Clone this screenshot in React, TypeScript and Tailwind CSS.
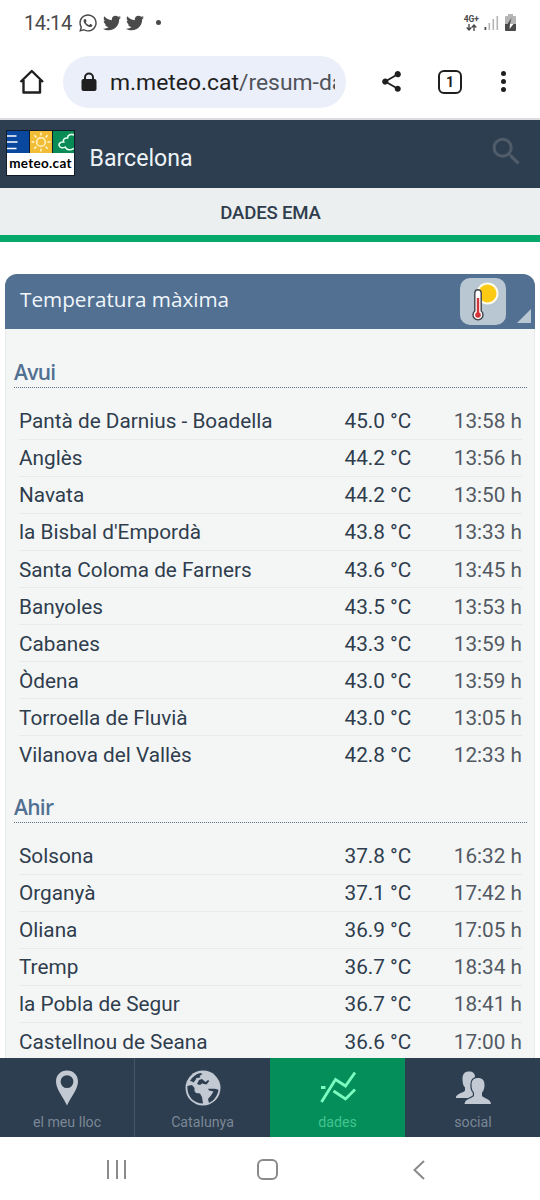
import { FaTwitter, FaWhatsapp } from "react-icons/fa";
import { MdSearch, MdShare } from "react-icons/md";

type Reading = {
  place: string;
  value: string;
  time: string;
};

const today: Reading[] = [
  { place: "Pantà de Darnius - Boadella", value: "45.0 °C", time: "13:58 h" },
  { place: "Anglès", value: "44.2 °C", time: "13:56 h" },
  { place: "Navata", value: "44.2 °C", time: "13:50 h" },
  { place: "la Bisbal d'Empordà", value: "43.8 °C", time: "13:33 h" },
  { place: "Santa Coloma de Farners", value: "43.6 °C", time: "13:45 h" },
  { place: "Banyoles", value: "43.5 °C", time: "13:53 h" },
  { place: "Cabanes", value: "43.3 °C", time: "13:59 h" },
  { place: "Òdena", value: "43.0 °C", time: "13:59 h" },
  { place: "Torroella de Fluvià", value: "43.0 °C", time: "13:05 h" },
  { place: "Vilanova del Vallès", value: "42.8 °C", time: "12:33 h" },
];

const yesterday: Reading[] = [
  { place: "Solsona", value: "37.8 °C", time: "16:32 h" },
  { place: "Organyà", value: "37.1 °C", time: "17:42 h" },
  { place: "Oliana", value: "36.9 °C", time: "17:05 h" },
  { place: "Tremp", value: "36.7 °C", time: "18:34 h" },
  { place: "la Pobla de Segur", value: "36.7 °C", time: "18:41 h" },
  { place: "Castellnou de Seana", value: "36.6 °C", time: "17:00 h" },
];

function StatusBar() {
  return (
    <div className="flex h-[45px] shrink-0 items-center pl-[24px] pr-[24px] text-[#4a4a4a]">
      <span className="mt-px w-[49px] whitespace-nowrap text-[20px] leading-none tracking-[-0.4px]">14:14</span>
      <FaWhatsapp className="ml-[5px] size-[20px]" />
      <FaTwitter className="ml-[5px] size-[18px]" />
      <FaTwitter className="ml-[5px] size-[18px]" />
      <span className="ml-[12px] size-[5px] rounded-full bg-[#4a4a4a]" />
      <div className="ml-auto flex items-center">
        <div className="flex flex-col items-center">
          <span className="text-[8.5px] font-bold leading-[9px]">4G+</span>
          <svg className="h-[7px] w-[11px]" viewBox="0 0 11 7" fill="none" stroke="currentColor" strokeWidth="1.4">
            <path d="M3 0v6M.7 3.6 3 6l2.3-2.4M8 7V1M5.7 3.4 8 1l2.3 2.4" />
          </svg>
        </div>
        <svg className="ml-[5px] h-[15px] w-[15px]" viewBox="0 0 15 15">
          <path d="M.5 12h1.8v3H.5z" fill="#4a4a4a" />
          <path d="M4.5 8h1.6v7H4.5zM8.5 4h1.6v11H8.5zM12.5 1h1.6v14h-1.6z" fill="#b5b5b5" />
        </svg>
        <svg className="ml-[6px] h-[17px] w-[11px]" viewBox="0 0 11 17">
          <path d="M3 0h5v2h2a1 1 0 0 1 1 1v7H0V3a1 1 0 0 1 1-1h2z" fill="#b5b5b5" />
          <path d="M0 10h11v6a1 1 0 0 1-1 1H1a1 1 0 0 1-1-1z" fill="#4a4a4a" />
          <path d="M6.500 4 2.500 10H5z" fill="#4a4a4a" />
          <path d="M5 10h3.500L4.500 15z" fill="#fff" />
        </svg>
      </div>
    </div>
  );
}

function BrowserBar() {
  return (
    <div className="flex h-[75px] shrink-0 items-center border-b-2 border-[#dadce0] pl-[19px] pr-[34px] text-[#1f1f1f]">
      <svg className="h-[26px] w-[26px]" viewBox="0 0 26 26" fill="none" stroke="currentColor" strokeWidth="2.4" strokeLinejoin="round">
        <path d="M1.500 13 12.800 2 24 13M4.500 11v12.500h16.500V11" />
      </svg>
      <div className="ml-[18px] flex h-[52px] w-[283px] items-center rounded-full bg-[#ebeff9] pl-[18px] pr-[11px]">
        <svg className="h-[20px] w-[16px] shrink-0" viewBox="0 0 16 20">
          <path d="M4 8V5.500a4 4 0 0 1 8 0V8" fill="none" stroke="currentColor" strokeWidth="2" />
          <rect x=".5" y="7" width="15" height="12" rx="2" fill="currentColor" />
        </svg>
        <div className="ml-[13px] mt-[2px] w-[225px] overflow-hidden whitespace-nowrap text-[22.9px] leading-[32px]">
          m.meteo.cat<span className="text-[#50535a]">/resum-da</span>
        </div>
      </div>
      <MdShare className="ml-[33px] size-[25px]" />
      <div className="ml-[34px] flex size-[24px] items-center justify-center rounded-[6px] border-[2.5px] border-[#1f1f1f] text-[14px] font-bold leading-none">
        1
      </div>
      <div className="ml-auto flex flex-col gap-[3px]">
        <span className="size-[5px] rounded-full bg-[#1f1f1f]" />
        <span className="size-[5px] rounded-full bg-[#1f1f1f]" />
        <span className="size-[5px] rounded-full bg-[#1f1f1f]" />
      </div>
    </div>
  );
}

function Logo() {
  return (
    <div className="mb-[2px] flex h-[46px] w-[69px] flex-col border border-[#111c2a] bg-white">
      <svg className="h-[22px] w-[67px] shrink-0" viewBox="0 0 67 22" fill="none">
        <path d="M0 0h22v22H0z" fill="#0a479f" />
        <path d="M22 0h23v22H22z" fill="#f2bd36" />
        <path d="M45 0h22v22H45z" fill="#098b55" />
        <path d="M22.500 0v22M45.500 0v22" stroke="#111c2a" />
        <path d="M0 5h9.500M0 11h10.500M0 17.500h9.500" stroke="#fff" strokeWidth="1.6" />
        <circle cx="34" cy="11" r="4.300" stroke="#fff5c4" strokeWidth="1.5" />
        <path
          d="M34 1.500v3M34 17.500v3M24.500 11h3M40.500 11h3M27.300 4.300l2.100 2.100M38.600 15.600l2.100 2.100M27.300 17.700l2.100-2.100M38.600 6.400l2.100-2.100"
          stroke="#fff5c4"
          strokeWidth="1.5"
        />
        <path
          d="M67 4c-3-1.500-6.500 0-6.500 3-3-.3-4.800 1.600-3.800 4-3.500-.2-5.200 1.800-4.500 3.800.8 2.200 3.700 2.400 6 1.300 1.500 3 5.500 3.500 8.800 1.200"
          stroke="#e4fff0"
          strokeWidth="1.6"
        />
      </svg>
      <span className="whitespace-nowrap text-center font-[Lato,sans-serif] text-[13.5px] font-bold leading-[20px] tracking-[0.3px] text-black">
        meteo.cat
      </span>
    </div>
  );
}

function Header() {
  return (
    <header className="flex h-[68px] shrink-0 items-center bg-[#2d3e50] pl-[6px] pr-[15px]">
      <Logo />
      <h1 className="ml-[14.5px] mt-[10px] text-[23.1px] leading-[30px] text-[#eef3f7]">Barcelona</h1>
      <MdSearch className="mb-[5px] ml-auto size-[37px] text-[#505c69]" />
    </header>
  );
}

function ThermometerBadge() {
  return (
    <svg className="h-[47px] w-[46px]" viewBox="0 0 46 47">
      <rect width="46" height="47" rx="10" fill="#b9c7d3" />
      <circle cx="27.500" cy="15.500" r="11" fill="#fffbea" />
      <circle cx="27.500" cy="15.500" r="9" fill="#fcc913" />
      <path d="M14.800 15a3.200 3.200 0 0 1 6.400 0v18a5 5 0 1 1-6.400 0z" fill="#fff" stroke="#3f4248" strokeWidth="1.4" />
      <path d="M18 20v17" stroke="#d1353a" strokeWidth="2.4" />
      <circle cx="18" cy="37" r="2.800" fill="#d1353a" />
    </svg>
  );
}

function ReadingList({ title, readings }: { title: string; readings: Reading[] }) {
  return (
    <section>
      <h3 className="h-[29px] border-b border-dotted border-[#5f6f7f] font-['Open_Sans',sans-serif] text-[21px] font-semibold leading-[27px] tracking-[-0.7px] text-[#527092]">
        {title}
      </h3>
      <ul className="mx-[5px] mt-[14.5px]">
        {readings.map((reading) => (
          <li
            key={reading.place}
            className="flex h-[37.1px] items-center border-b border-[#e8ebec] pt-[2px] text-[20.75px] leading-none text-[#2f3d4d] last:border-transparent"
          >
            <span className="w-[325.5px] whitespace-nowrap">{reading.place}</span>
            <span className="whitespace-nowrap">{reading.value}</span>
            <span className="ml-auto whitespace-nowrap text-[#535a63]">{reading.time}</span>
          </li>
        ))}
      </ul>
    </section>
  );
}

function PinIcon() {
  return (
    <svg className="h-[36px] w-[24px]" viewBox="0 0 24 36">
      <path
        fillRule="evenodd"
        d="M12 .5C5.500.500 1 5.200 1 11.500 1 19 7.500 26 12 35.500 16.500 26 23 19 23 11.500 23 5.200 18.500.500 12 .500zM12 5.200a6.400 6.400 0 1 1 0 12.800 6.400 6.400 0 0 1 0-12.800z"
        fill="#c3c9d2"
      />
    </svg>
  );
}

function GlobeIcon() {
  return (
    <svg className="size-[36px]" viewBox="0 0 36 36">
      <circle cx="18" cy="18" r="17.500" fill="#c3c9d2" />
      <g fill="#2d3e50">
        <path d="M2.300 16 7 15l2.500 3 0 3 1.500 2 4 .5L17 27l1 6.500C9 33.500 2 27 2.300 16z" />
        <path d="M5 11c2-4 6-7 10.500-8l2 1-3 2 1 1.500-4 .5-1 2-2 2.500L7 11.500z" />
        <path d="m14 10 3-1 3.500 3L23 10l1.300 1L21.500 14.500 17 13.500 15 15l-3-1z" />
        <path d="M23 18.800h7l3.500 1C32.500 26.500 28.500 31 24 33l-1-4 3-3.500 2.500-4-4.500-1z" />
      </g>
    </svg>
  );
}

function TrendIcon() {
  return (
    <svg className="size-[36px]" viewBox="0 0 36 36" fill="none" stroke="#7dfcc0" strokeWidth="2.8">
      <path d="M1.500 32 15.500 9.500l10 6.500L35 2.500M13.500 21 25.500 29 35 19.500M1 17.500h4.500" />
    </svg>
  );
}

function PeopleIcon() {
  const front =
    "M23 8c4.500 0 6.500 2.500 6.500 7 0 3.500-1 6-2.500 7.500v3.500c2 2.500 8.500 2.500 9 8H9.500c.5-5.500 7.500-5.500 9.500-8v-3.500C17.500 21 16.500 18.500 16.500 15c0-4.500 2-7 6.500-7z";

  return (
    <svg className="size-[36px]" viewBox="0 0 36 36" fill="#c3c9d2">
      <path d="M14 1.500c4 0 6 2 6 5.500L18 20v8H.8c.5-5 7.200-4.500 9.200-7.500v-3C8.500 16 7.500 13.500 7.500 9c0-5 2-7.500 6.500-7.500z" />
      <path d={front} stroke="#2d3e50" strokeWidth="2.4" />
      <path d={front} />
    </svg>
  );
}

function BottomNav() {
  return (
    <nav className="grid h-[79px] shrink-0 grid-cols-4 bg-[#2d3e50] text-[14.2px] leading-[18px] text-[#7b8795]">
      <div className="flex flex-col items-center gap-[7px] border-r border-[#44566a] pt-[12px]">
        <PinIcon />
        <span>el meu lloc</span>
      </div>
      <div className="flex flex-col items-center gap-[7px] pt-[12px]">
        <GlobeIcon />
        <span>Catalunya</span>
      </div>
      <div className="flex flex-col items-center gap-[7px] bg-[#038e5a] pt-[12px] text-[#43c48f]">
        <TrendIcon />
        <span>dades</span>
      </div>
      <div className="flex flex-col items-center gap-[7px] pl-px pt-[12px]">
        <PeopleIcon />
        <span>social</span>
      </div>
    </nav>
  );
}

function SystemNav() {
  return (
    <div className="flex h-[63px] shrink-0 items-center pl-[107px] pt-[2px] text-[#8a8a8a]">
      <div className="flex h-[19px] w-[19px] justify-between">
        <span className="w-[2px] bg-[#8a8a8a]" />
        <span className="w-[2px] bg-[#8a8a8a]" />
        <span className="w-[2px] bg-[#8a8a8a]" />
      </div>
      <span className="ml-[131px] size-[21px] rounded-[6px] border-2 border-[#8a8a8a]" />
      <svg className="ml-[135px] h-[20px] w-[12px]" viewBox="0 0 12 20" fill="none" stroke="currentColor" strokeWidth="2">
        <path d="M11 1 1.500 10l9.500 9" />
      </svg>
    </div>
  );
}

export default function App() {
  return (
    <div className="flex h-[1200px] w-[540px] flex-col overflow-hidden bg-white font-[Roboto,sans-serif]">
      <StatusBar />
      <BrowserBar />
      <Header />
      <div className="flex h-[54px] shrink-0 items-center justify-center border-b-[7px] border-[#06a96b] bg-[#ebeff0] pl-px pt-[5px] text-[18.6px] font-medium tracking-[-0.2px] text-[#2f3d4d]">
        DADES EMA
      </div>
      <main className="min-h-0 flex-1 overflow-hidden px-[5px] pt-[32px]">
        <div className="h-[900px] rounded-t-[12px] border border-[#e9ecec] bg-[#f4f6f6]">
          <div className="relative -mx-px -mt-px flex h-[55px] items-center justify-between rounded-t-[12px] bg-[#517092] pl-[15px] pr-[29px]">
            <h2 className="mb-[3px] font-['Open_Sans',sans-serif] text-[20.7px] text-[#f1f6fb]">Temperatura màxima</h2>
            <ThermometerBadge />
            <svg className="absolute bottom-[6px] right-[4px] size-[14px]" viewBox="0 0 14 14">
              <path d="M14 0v14H0z" fill="#b9c7d3" />
            </svg>
          </div>
          <div className="flex flex-col gap-[20.5px] pl-[8px] pr-[7px] pt-[30px]">
            <ReadingList title="Avui" readings={today} />
            <ReadingList title="Ahir" readings={yesterday} />
          </div>
        </div>
      </main>
      <BottomNav />
      <SystemNav />
    </div>
  );
}
